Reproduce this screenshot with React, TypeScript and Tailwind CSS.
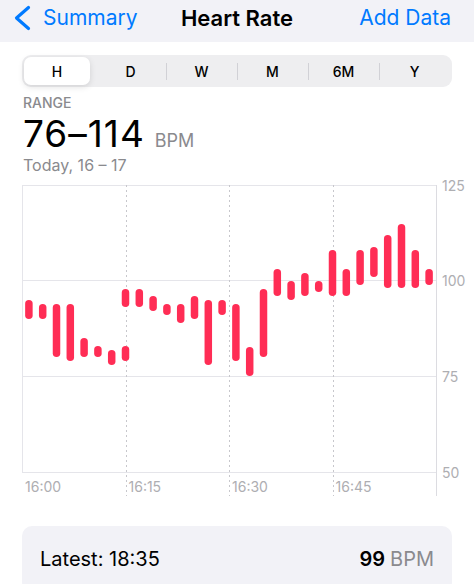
import React from 'react';

// [minute past 16:00, top y, bottom y] in chart pixels
const samples: [number, number, number][] = [
  [1, 120, 139],
  [3, 124, 139],
  [5, 124, 177],
  [7, 124, 181],
  [9, 158, 177],
  [11, 166, 177],
  [13, 170, 185],
  [15, 166, 181],
  [15, 109, 127],
  [17, 109, 127],
  [19, 116, 131],
  [21, 124, 135],
  [23, 124, 143],
  [25, 116, 139],
  [27, 120, 185],
  [29, 120, 135],
  [31, 124, 181],
  [33, 167, 196],
  [35, 109, 177],
  [37, 89, 116],
  [39, 101, 120],
  [41, 93, 116],
  [43, 101, 112],
  [45, 70, 116],
  [47, 89, 116],
  [49, 70, 105],
  [51, 67, 97],
  [53, 55, 108],
  [55, 44, 108],
  [57, 70, 108],
  [59, 89, 105],
];

const left = 22;
const right = 436;
const perMin = (right - left) / 60;

const gridLines = [
  { label: '125', y: 5.5 },
  { label: '100', y: 100.5 },
  { label: '75', y: 196.5 },
  { label: '50', y: 292.5 },
];

const ticks = [
  { label: '16:00', min: 0 },
  { label: '16:15', min: 15 },
  { label: '16:30', min: 30 },
  { label: '16:45', min: 45 },
];

const periods = ['H', 'D', 'W', 'M', '6M', 'Y'];

const HeartChart = () => (
  <svg width={474} height={330} className="block">
    <g transform="translate(0,10)">
      {gridLines.map((g) => (
        <line key={g.label} x1={left} x2={right} y1={g.y} y2={g.y} stroke="#e5e5ea" strokeWidth={1} />
      ))}
      <line x1={left + 0.5} x2={left + 0.5} y1={5} y2={292.5} stroke="#e5e5ea" strokeWidth={1} />
      <line x1={right + 0.5} x2={right + 0.5} y1={5} y2={316} stroke="#dcdce1" strokeWidth={1} />
      {ticks.slice(1).map((t) => {
        const x = Math.round(left + t.min * perMin) + 0.5;
        return (
          <line key={t.label} x1={x} x2={x} y1={5} y2={316} stroke="#c7c7cc" strokeWidth={1} strokeDasharray="2 3" />
        );
      })}
      {samples.map(([min, top, bottom], i) => (
        <rect
          key={i}
          x={left + min * perMin - 3.75}
          y={top}
          width={7.5}
          height={bottom - top}
          rx={3.75}
          fill="#ff2d55"
        />
      ))}
      {gridLines.map((g) => (
        <text key={g.label} x={442} y={g.y + 5.5} fontSize={14} fill="#aeaeb2">
          {g.label}
        </text>
      ))}
      {ticks.map((t) => (
        <text key={t.label} x={left + t.min * perMin + 3} y={312} fontSize={14} fill="#aeaeb2">
          {t.label}
        </text>
      ))}
    </g>
  </svg>
);

export default function App() {
  return (
    <div className="w-[474px] h-[584px] overflow-hidden bg-white font-['Inter',sans-serif] text-black">
      {/* Nav bar */}
      <div className="h-[42px] bg-[#f2f2f7] grid grid-cols-[1fr_auto_1fr] items-start pt-[5px] px-[14px]">
        <div className="flex items-center text-[#007aff]">
          <svg width={18} height={26} viewBox="0 0 18 26" className="block">
            <path d="M14.5 2.5 L2.5 13 L14.5 23.5" fill="none" stroke="#007aff" strokeWidth={3.2} strokeLinecap="round" strokeLinejoin="round" />
          </svg>
          <span className="ml-[11px] text-[21px] leading-[26px]">Summary</span>
        </div>
        <div className="text-[22px] leading-[26px] font-semibold">Heart Rate</div>
        <div className="text-right mr-[9px] text-[21px] leading-[26px] text-[#007aff]">Add Data</div>
      </div>

      {/* Period picker */}
      <div className="mt-[13px] mx-[22px] h-[32px] rounded-[9px] bg-[#eeeef0] p-[2px] grid grid-cols-6">
        {periods.map((p, i) => (
          <div key={p} className="relative flex items-center">
            {i > 1 && <div className="absolute left-0 top-[6px] h-[17px] w-px bg-[#d1d1d6]" />}
            {i === 0 ? (
              <div className="w-[66px] h-full rounded-[7px] bg-white shadow-[0_2px_6px_rgba(0,0,0,0.12)] flex items-center justify-center text-[14px] font-medium">
                {p}
              </div>
            ) : (
              <div className="w-full text-center text-[14px] font-medium">{p}</div>
            )}
          </div>
        ))}
      </div>

      {/* Summary */}
      <div className="px-[23px]">
        <div className="mt-[7px] text-[14px] leading-[17px] text-[#8a8a8e] font-medium">RANGE</div>
        <div className="mt-[3px] h-[40px] leading-[40px] flex items-baseline">
          <span className="text-[37px] tracking-[1px]">76–114</span>
          <span className="ml-[10px] text-[18px] text-[#8a8a8e]">BPM</span>
        </div>
        <div className="mt-[1px] text-[16px] leading-[20px] text-[#8a8a8e]">Today, 16 – 17</div>
      </div>

      <div className="-mt-[5px]">
        <HeartChart />
      </div>

      {/* Latest */}
      <div className="mt-[26px] mx-[22px] h-[66px] rounded-[10px] bg-[#f2f2f7] flex items-center justify-between px-[18px]">
        <span className="text-[20px] leading-[24px]">Latest: 18:35</span>
        <span className="text-[20px] leading-[24px]">
          <span className="font-semibold">99</span>
          <span className="ml-[5px] text-[#8a8a8e]">BPM</span>
        </span>
      </div>
    </div>
  );
}
